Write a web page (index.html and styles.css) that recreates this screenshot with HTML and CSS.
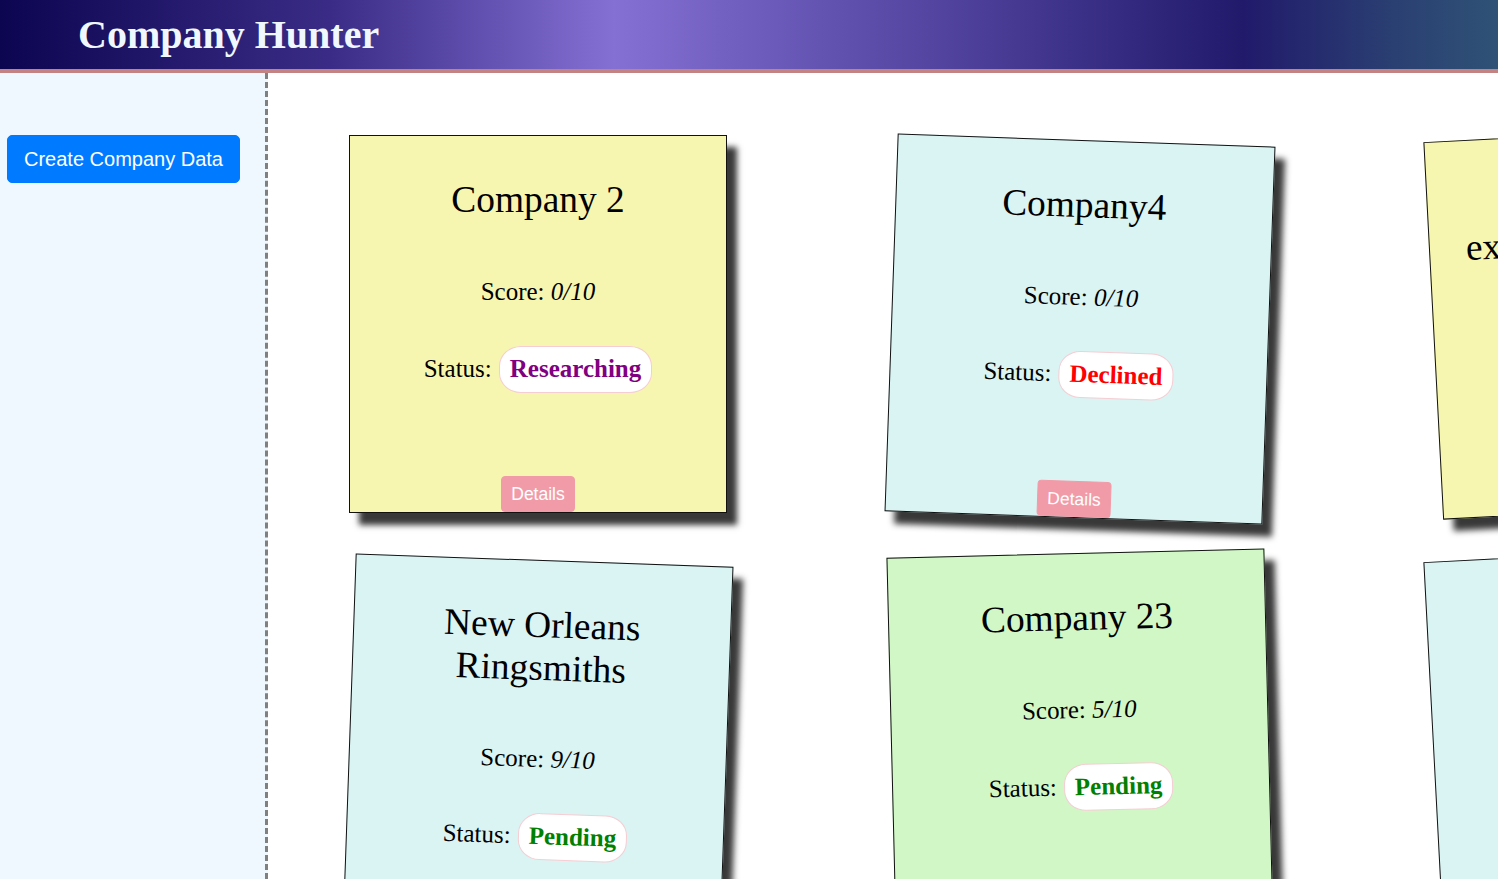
FILE: index.html
```html
<!DOCTYPE html>
<html lang="en">
<head>
<meta charset="utf-8">
<title>Company Hunter</title>
<link rel="stylesheet" href="styles.css">
</head>
<body>
<header class="topbar">
  <h1 class="brand">Company Hunter</h1>
</header>
<div class="layout">
  <aside class="sidebar">
    <button class="btn-create" type="button">Create Company Data</button>
  </aside>
  <main class="board">
    <article class="note note-yellow">
      <h2 class="note-title">Company 2</h2>
      <p class="note-score">Score: <em>0/10</em></p>
      <div class="note-status"><span>Status:</span><span class="badge badge-researching">Researching</span></div>
      <button class="btn-details" type="button">Details</button>
    </article>
    <article class="note note-cyan tilt-right">
      <h2 class="note-title">Company4</h2>
      <p class="note-score">Score: <em>0/10</em></p>
      <div class="note-status"><span>Status:</span><span class="badge badge-declined">Declined</span></div>
      <button class="btn-details" type="button">Details</button>
    </article>
    <article class="note note-yellow tilt-left">
      <h2 class="note-title">Big Company exploratory Holding</h2>
      <p class="note-score">Score: <em>0/10</em></p>
      <div class="note-status"><span>Status:</span><span class="badge badge-pending">Pending</span></div>
      <button class="btn-details" type="button">Details</button>
    </article>
    <article class="note note-cyan tilt-right">
      <h2 class="note-title">New Orleans Ringsmiths</h2>
      <p class="note-score">Score: <em>9/10</em></p>
      <div class="note-status"><span>Status:</span><span class="badge badge-pending">Pending</span></div>
      <button class="btn-details" type="button">Details</button>
    </article>
    <article class="note note-green tilt-slight">
      <h2 class="note-title">Company 23</h2>
      <p class="note-score">Score: <em>5/10</em></p>
      <div class="note-status"><span>Status:</span><span class="badge badge-pending">Pending</span></div>
      <button class="btn-details" type="button">Details</button>
    </article>
    <article class="note note-cyan tilt-left">
      <h2 class="note-title">Company 7</h2>
      <p class="note-score">Score: <em>3/10</em></p>
      <div class="note-status"><span>Status:</span><span class="badge badge-researching">Researching</span></div>
      <button class="btn-details" type="button">Details</button>
    </article>
  </main>
</div>
</body>
</html>
```

FILE: styles.css
```css
html, body {
  margin: 0;
  padding: 0;
  height: 100%;
  overflow: hidden;
  background: #ffffff;
  font-family: "Liberation Serif", "Times New Roman", serif;
}

.topbar {
  box-sizing: border-box;
  height: 73px;
  border-bottom: 4px solid #c48383;
  background: linear-gradient(to right, #0c0550 0%, #3a2c86 22%, #8470d3 41%, #4a3d97 66%, #211a6b 83%, #2a3f72 93%, #2f5276 100%);
  padding: 12px 0 0 78px;
}

.brand {
  margin: 0;
  font-family: "Liberation Serif", "Times New Roman", serif;
  font-size: 40px;
  line-height: 46px;
  font-weight: bold;
  color: #f0f8ff;
}

.layout {
  display: flex;
  height: calc(100vh - 73px);
}

.sidebar {
  box-sizing: border-box;
  flex: 0 0 268px;
  background: #f0f8ff;
  border-right: 3px dashed #808080;
  padding: 62px 0 0 7px;
}

.btn-create {
  display: block;
  font-family: "Liberation Sans", Arial, sans-serif;
  font-size: 20px;
  line-height: 30px;
  padding: 8px 16px;
  border: 1px solid #007bff;
  border-radius: 5px;
  background: #007bff;
  color: #ffffff;
  cursor: pointer;
}

.board {
  flex: 1 1 auto;
  min-width: 0;
  overflow: hidden;
  display: grid;
  grid-template-columns: repeat(3, 378px);
  grid-auto-rows: 378px;
  column-gap: 164px;
  row-gap: 42px;
  padding: 62px 0 0 81px;
  align-content: start;
}

.note {
  box-sizing: border-box;
  width: 378px;
  height: 378px;
  border: 1px solid #111111;
  box-shadow: 10px 12px 6px rgba(0, 0, 0, 0.78);
  display: flex;
  flex-direction: column;
  align-items: center;
  text-align: center;
  color: #000000;
}

.note-yellow { background: #f7f6b0; }
.note-cyan { background: #daf3f3; }
.note-green { background: #d1f7c6; }

.tilt-right { transform: translateY(5px) rotate(2deg); }
.tilt-left { transform: translateY(-3px) rotate(-3deg); }
.tilt-slight { transform: translateY(-2px) rotate(-1.4deg); }

.note-title {
  margin: 43px 0 0;
  padding: 0 20px;
  font-size: 37.4px;
  line-height: 42.5px;
  font-weight: normal;
}

.note-score {
  margin: 56px 0 0;
  font-size: 25px;
  line-height: 28px;
}

.note-score em {
  font-style: italic;
}

.note-status {
  margin-top: 40px;
  display: flex;
  align-items: baseline;
  justify-content: center;
  gap: 7px;
  font-size: 25px;
  line-height: 28px;
}

.badge {
  display: inline-block;
  background: #ffffff;
  border: 1px solid #f6cdd3;
  border-radius: 22px / 20px;
  padding: 8px 10px 9px;
  font-weight: bold;
}

.badge-researching { color: #800080; }
.badge-declined { color: #ff0000; }
.badge-pending { color: #008000; }

.btn-details {
  margin-top: auto;
  height: 36px;
  padding: 0 9px;
  border: 1px solid #f29ba8;
  border-radius: 4px;
  background: #f29ba8;
  color: #ffffff;
  font-family: "Liberation Sans", Arial, sans-serif;
  font-size: 17.5px;
  line-height: 34px;
  cursor: pointer;
}
```
